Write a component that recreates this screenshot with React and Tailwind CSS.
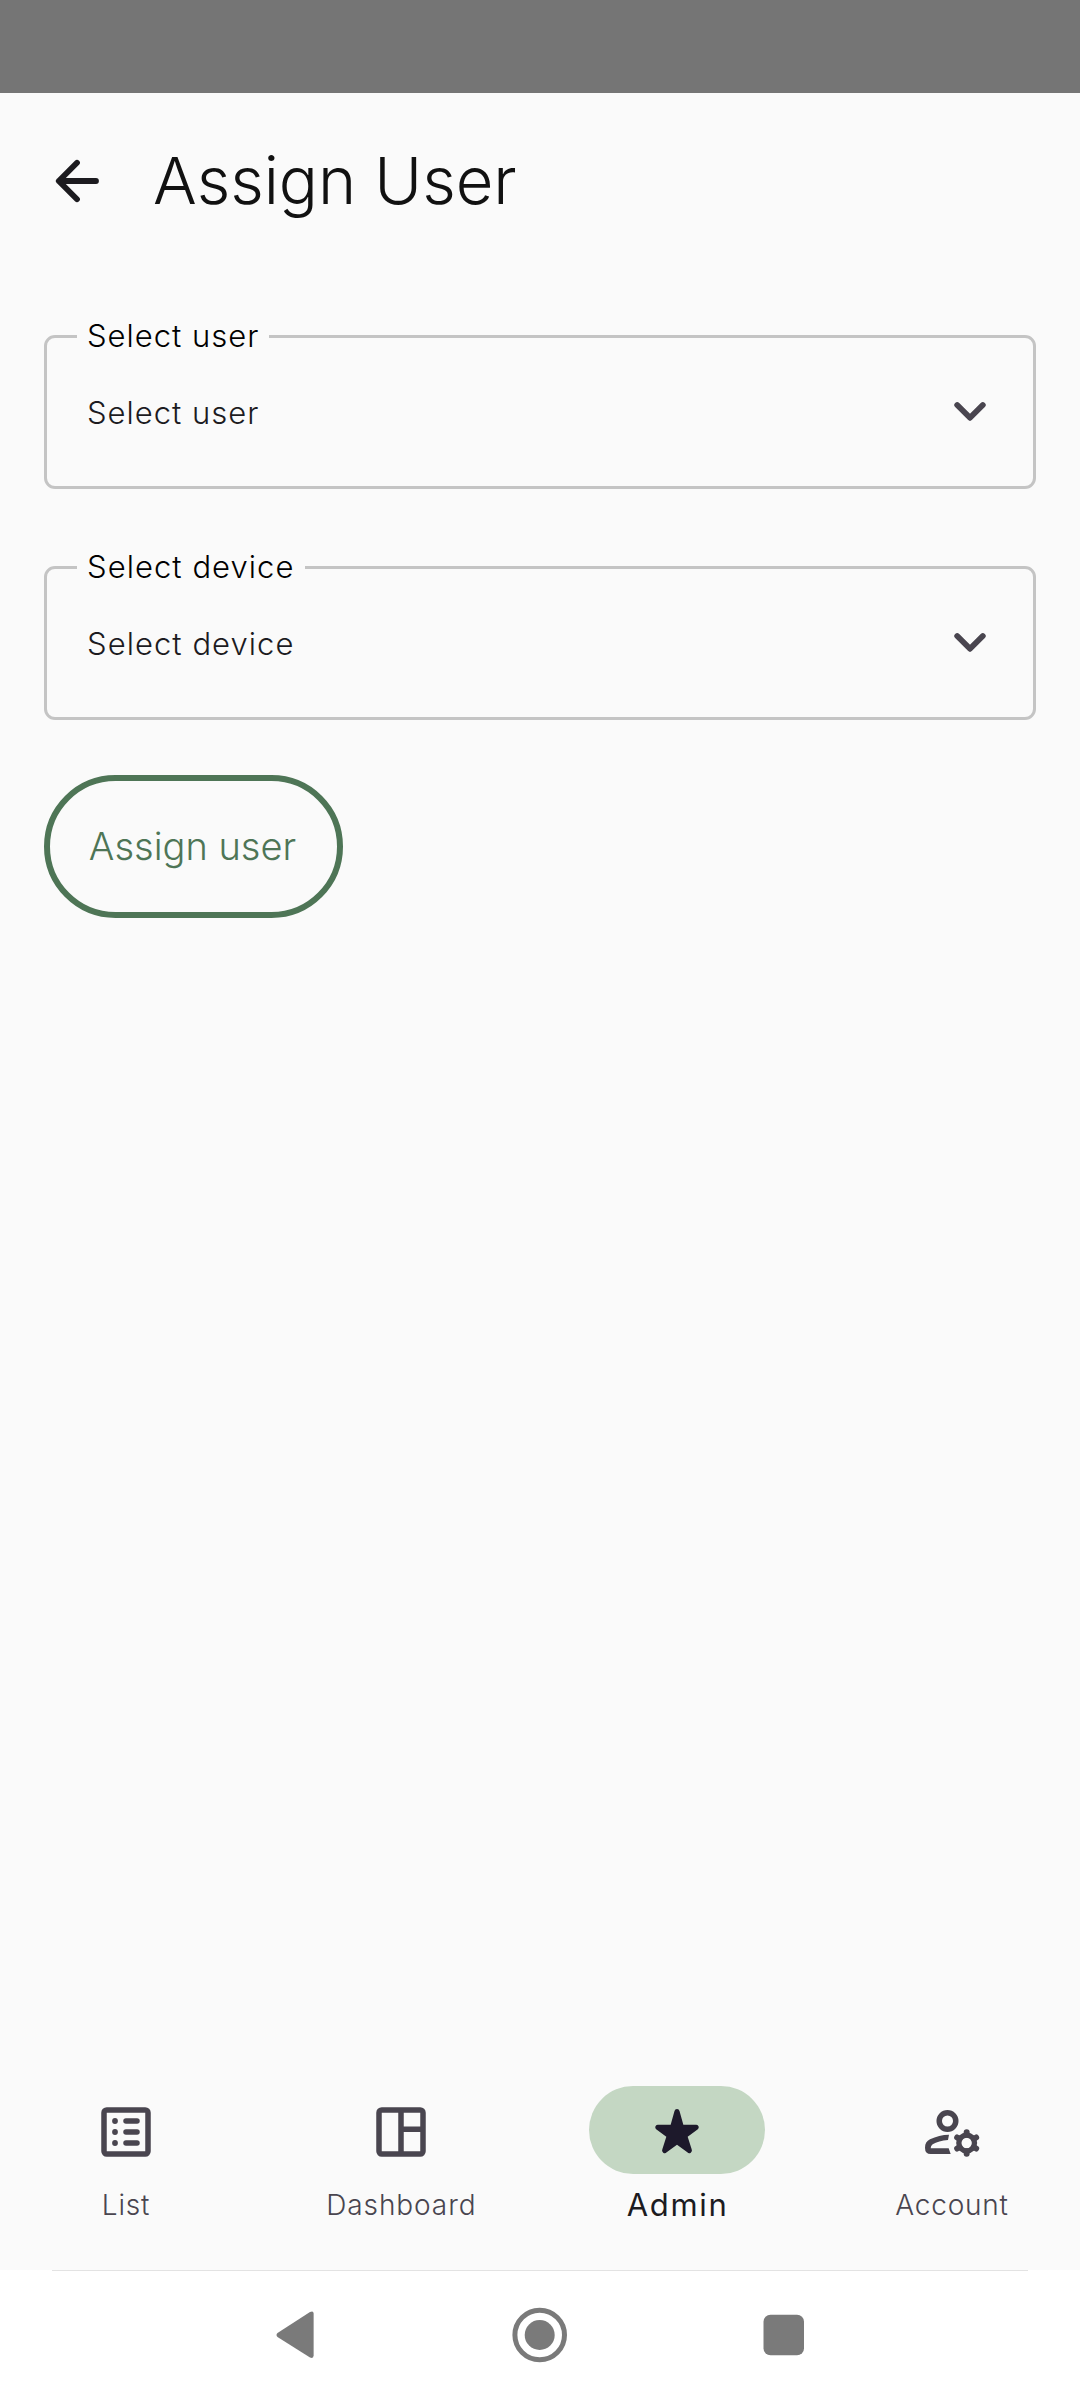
import React from "react";

function BackArrow() {
  return (
    <svg className="block h-[66px] w-[66px]" viewBox="0 0 66 66" fill="none" stroke="#1c1b1f" strokeWidth="5.8" strokeLinecap="round" strokeLinejoin="round">
      <path d="M52 33H15M33 14.8L14.8 33L33 51.2" />
    </svg>
  );
}

function Chevron() {
  return (
    <svg className="block h-[66px] w-[66px]" viewBox="0 0 66 66" fill="none" stroke="#49454f" strokeWidth="5.8" strokeLinecap="round" strokeLinejoin="round">
      <path d="M20.2 26L33 38.8L45.800 26" />
    </svg>
  );
}

function ListIcon() {
  return (
    <svg className="block h-[66px] w-[66px]" viewBox="0 0 24 24" fill="#49454f">
      <path fillRule="evenodd" d="M5 3H19A2 2 0 0 1 21 5V19A2 2 0 0 1 19 21H5A2 2 0 0 1 3 19V5A2 2 0 0 1 5 3ZM5 5V19H19V5Z" />
      {[8, 12, 16].map((y) => (
        <g key={y}>
          <circle cx="8" cy={y} r="1.05" />
          <rect x="11" y={y - 1} width="6" height="2" rx="1" />
        </g>
      ))}
    </svg>
  );
}

function DashboardIcon() {
  return (
    <svg className="block h-[66px] w-[66px]" viewBox="0 0 24 24" fill="#49454f">
      <path fillRule="evenodd" d="M5 3H19A2 2 0 0 1 21 5V19A2 2 0 0 1 19 21H5A2 2 0 0 1 3 19V5A2 2 0 0 1 5 3ZM5 5V19H11V5ZM13 5V10H19V5ZM13 12V19H19V12Z" />
    </svg>
  );
}

function StarIcon() {
  return (
    <svg className="block h-[66px] w-[66px]" viewBox="252 111 198 198" fill="#1d192b">
      <path d="M343.5 153A7.7 7.7 0 0 1 358.5 153L370 194H409A8 8 0 0 1 413.5 208L383 230L395 268A8 8 0 0 1 382 277L351 254L320 277A8 8 0 0 1 307 268L319 230L288.5 208A8 8 0 0 1 293 194H332Z" />
    </svg>
  );
}

function AccountIcon() {
  return (
    <svg className="block h-[66px] w-[66px]" viewBox="177 87 198 198" fill="#49454f">
      <circle cx="262.5" cy="153" r="24.8" fill="none" stroke="#49454f" strokeWidth="16.5" />
      <path d="M267 194L264 210C246 211 229 216 218 223Q212 227 212 235H266L272 252H212Q195 252 195 233C195 220 200 213 210 208C228 199 247 194 267 194Z" />
      <circle cx="320" cy="219" r="23.5" fill="none" stroke="#49454f" strokeWidth="16" />
      <path fill="none" stroke="#49454f" strokeWidth="18" strokeLinecap="round" d="M320 194V186.500M320 244V251.500M298.500 206.500L291.500 202.500M341.500 231.500L348.500 235.500M298.500 231.500L291.500 235.500M341.500 206.500L348.500 202.500" />
    </svg>
  );
}

function SelectField({ label, tracking }) {
  return (
    <div className="relative flex h-[154px] items-center justify-between rounded-[11px] border-[3px] border-[#c4c4c4] pr-[30px] pl-[40px]">
      <span className={`absolute top-[-22px] left-[30px] bg-[#fafafa] px-[10px] text-[31px] leading-[40px] font-light text-black ${tracking}`}>{label}</span>
      <span className={`mt-[2px] text-[31px] leading-[40px] font-light text-[#1c1b1f] ${tracking}`}>{label}</span>
      <Chevron />
    </div>
  );
}

const tabs = [
  { label: "List", Icon: ListIcon, text: "tracking-[0.8px]" },
  { label: "Dashboard", Icon: DashboardIcon, text: "tracking-[0.9px]" },
  { label: "Admin", Icon: StarIcon, text: "tracking-[1.7px] pl-[2px]", active: true },
  { label: "Account", Icon: AccountIcon, text: "tracking-[0.8px]" },
];

export default function App() {
  return (
    <div className="flex h-[2400px] w-[1080px] flex-col overflow-hidden bg-[#fafafa] font-['Inter',sans-serif]">
      <div className="h-[93px] shrink-0 bg-[#757575]" />
      <header className="flex h-[176px] shrink-0 items-center gap-[43px] pl-[44px]">
        <BackArrow />
        <h1 className="text-[65px] leading-[88px] font-light tracking-[-0.05px] text-[#111111]">Assign User</h1>
      </header>
      <main className="flex grow flex-col px-[44px] pt-[66px]">
        <SelectField label="Select user" tracking="tracking-[1px]" />
        <div className="h-[77px]" />
        <SelectField label="Select device" tracking="tracking-[1.05px]" />
        <button className="mt-[55px] h-[143px] w-[299px] rounded-full border-[6px] border-[#4e7556] pr-[2px] text-[38px] font-light text-[#4e7556]">Assign user</button>
      </main>
      <nav className="flex h-[184px] shrink-0 justify-between pr-[40px] pl-[38px]">
        {tabs.map(({ label, Icon, text, active }) => (
          <div key={label} className="flex w-[176px] flex-col items-center">
            <div className={active ? "flex h-[88px] w-[176px] items-center justify-center rounded-full bg-[#c4d7c3]" : "flex h-[88px] w-[176px] items-center justify-center pt-[4px]"}>
              <Icon />
            </div>
            <span className={`mt-[11px] leading-[40px] whitespace-nowrap ${text} ${active ? "text-[31px] font-normal text-[#1c1b1f]" : "text-[28px] font-light text-[#49454f]"}`}>{label}</span>
          </div>
        ))}
      </nav>
      <footer className="flex h-[130px] shrink-0 flex-col bg-white">
        <div className="mx-[52px] h-px bg-[#e3e3e3]" />
        <svg className="block h-[129px] w-full" viewBox="0 2271 1080 129" fill="#7a7a7a">
          <path d="M277.500 2333Q275.500 2335 277.500 2337L310 2357.500Q313.600 2359 313.600 2355.500V2313.500Q313.600 2310.500 310 2312Z" />
          <circle cx="539.700" cy="2335" r="24.800" fill="none" stroke="#7a7a7a" strokeWidth="5" />
          <circle cx="539.700" cy="2335" r="15" />
          <rect x="763.500" y="2314.800" width="40.500" height="40.500" rx="7" />
        </svg>
      </footer>
    </div>
  );
}
